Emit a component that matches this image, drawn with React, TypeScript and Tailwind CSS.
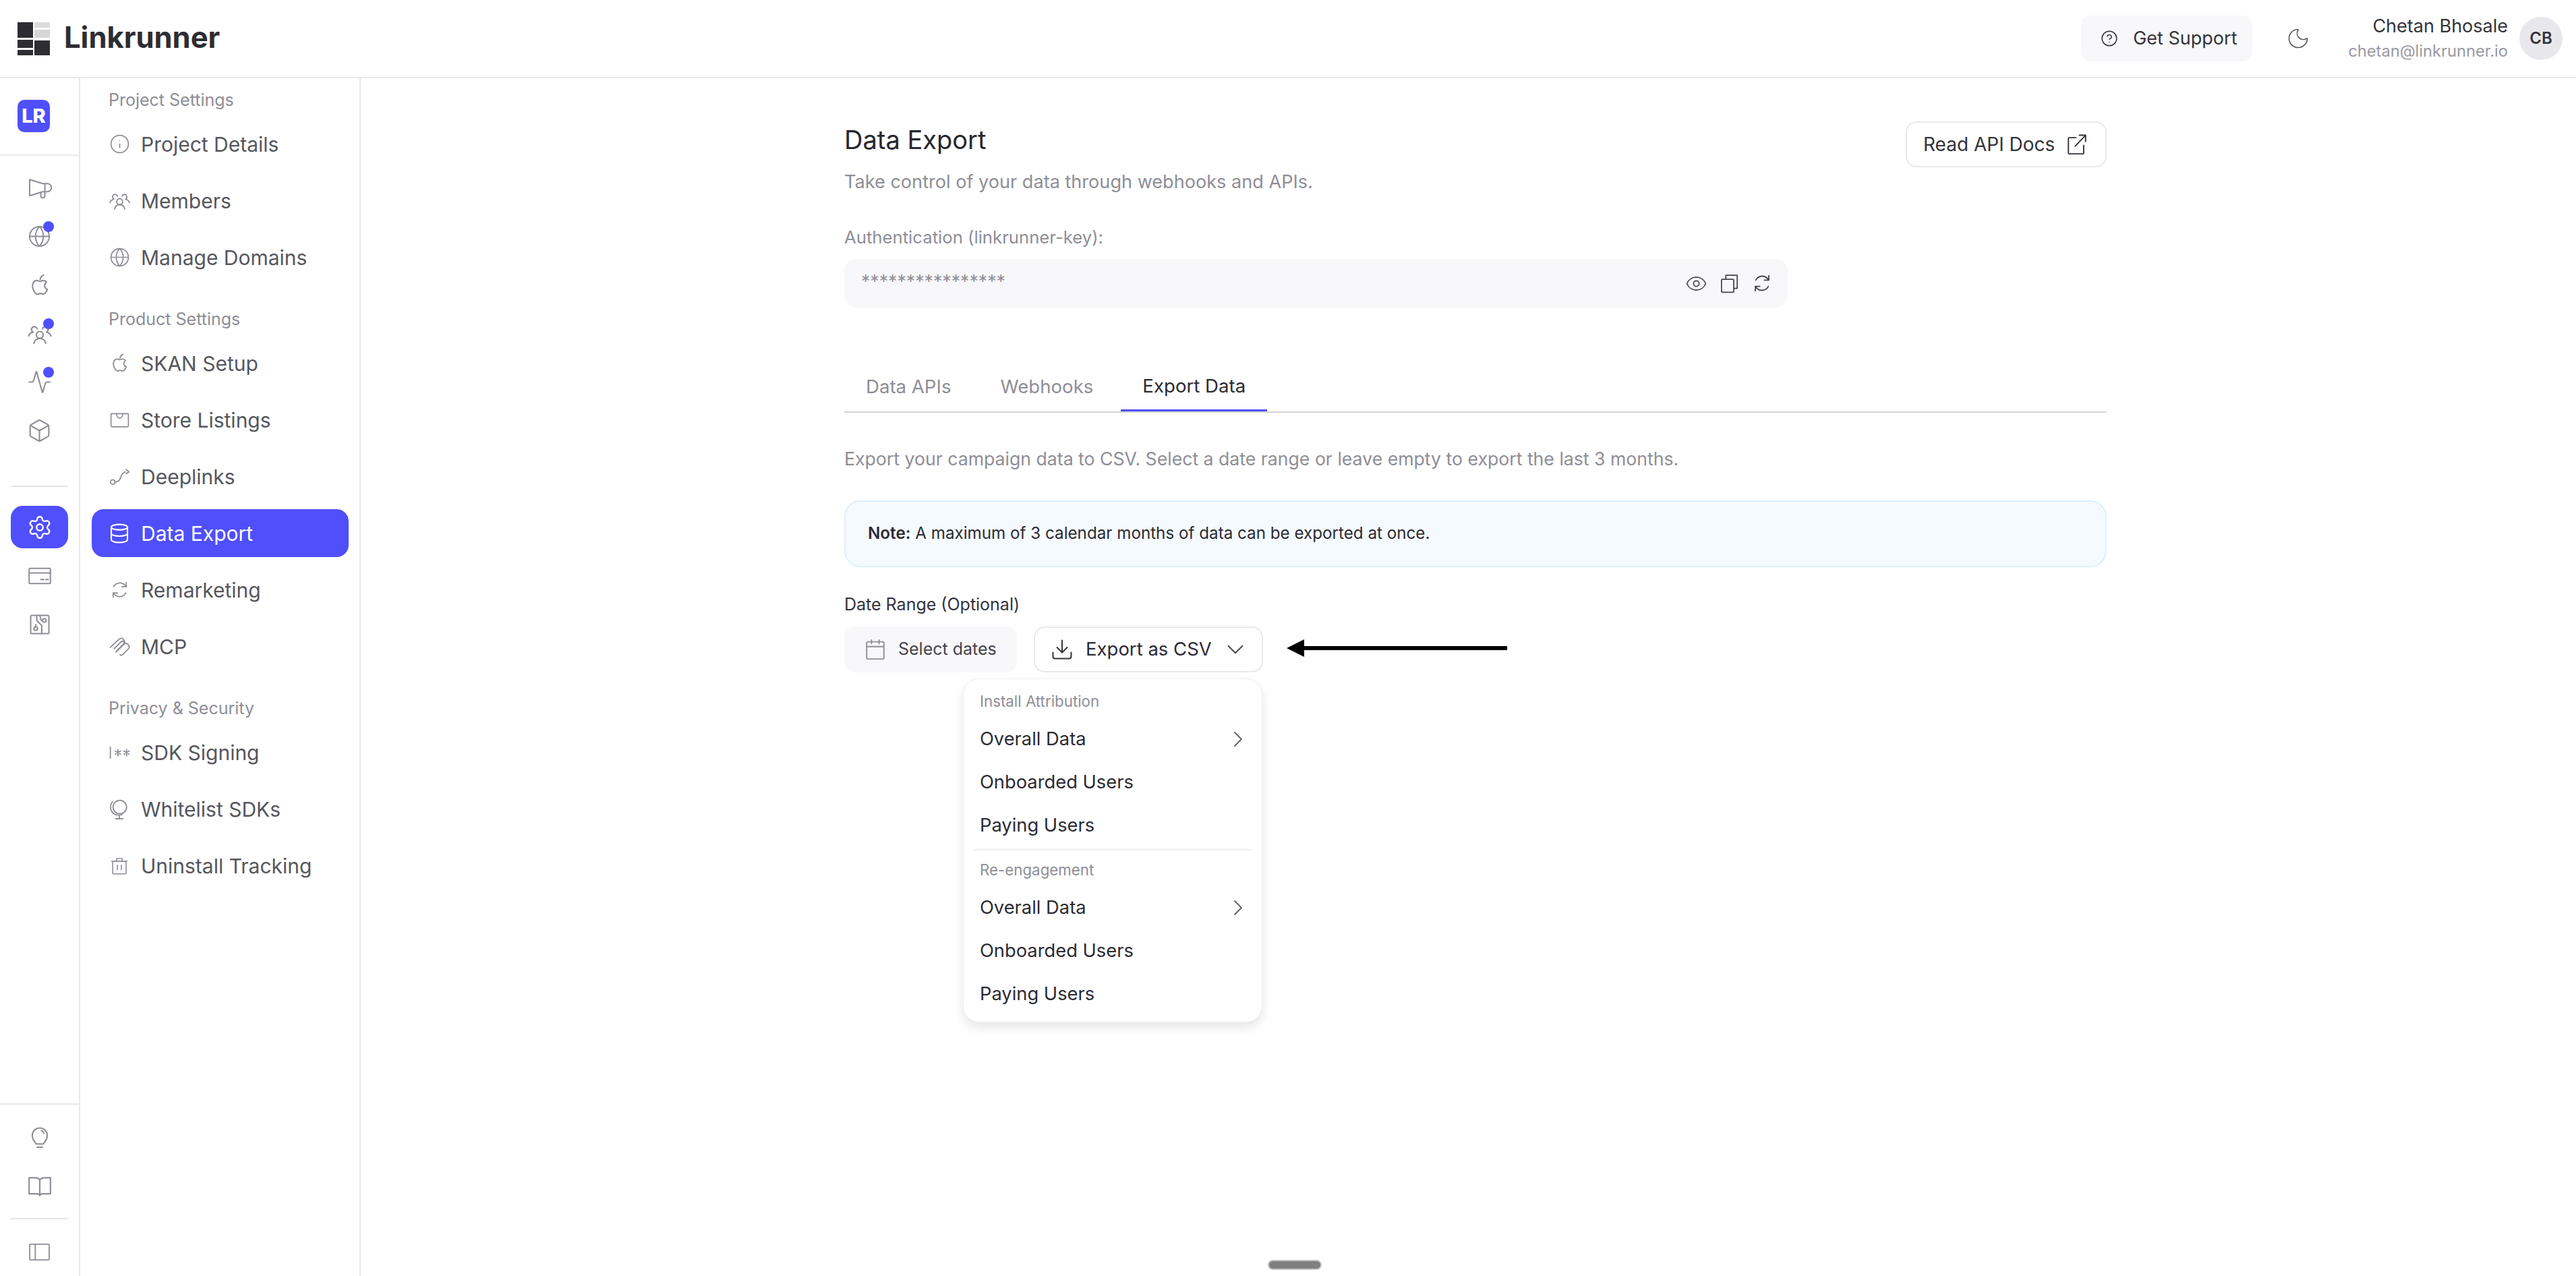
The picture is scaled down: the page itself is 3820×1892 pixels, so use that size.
import React from "react";
import { Globe, Activity, Box, Settings, Info, Database, Eye, Download, ChevronDown, ChevronRight, Moon, CircleHelp } from "lucide-react";

type SP = { className?: string; children?: React.ReactNode };
const SW = 1.35;
const Svg = ({ className = "w-[36px] h-[36px]", children }: SP) => (
  <svg viewBox="0 0 24 24" fill="none" stroke="currentColor" strokeWidth={SW} strokeLinecap="round" strokeLinejoin="round" className={`shrink-0 ${className}`}>{children}</svg>
);

const Megaphone = (p: SP) => <Svg {...p}><path d="M2 3.500v16l13-4h4.500a3.500 3.500 0 0 0 0-8H15L2 3.500Z"/><path d="M13 16v3.500a2 2 0 0 0 4 0V16"/><path d="M17 8.500v7"/></Svg>;
const People = (p: SP) => <Svg {...p}><circle cx="12" cy="13" r="3.200"/><path d="M6.500 21c.6-3 2.800-4.600 5.500-4.600s4.900 1.600 5.500 4.600"/><path d="M9.500 7.200a2.700 2.700 0 1 0-3.800 3.200c-2 .4-3.500 1.600-4.200 3.600"/><path d="M14.500 7.200a2.700 2.700 0 1 1 3.800 3.200c2 .4 3.500 1.600 4.200 3.600"/></Svg>;
const AppleLogo = (p: SP) => <Svg {...p}><path d="M16.500 12.500c0-2.200 1.700-3.300 1.800-3.400-1-1.400-2.500-1.600-3-1.600-1.300-.1-2.500.8-3.100.8-.7 0-1.700-.8-2.800-.8-1.400 0-2.800.8-3.500 2.100-1.500 2.600-.4 6.500 1.100 8.600.7 1 1.600 2.200 2.700 2.200 1.100 0 1.500-.7 2.800-.7s1.700.7 2.800.7c1.200 0 1.900-1.100 2.600-2.100.8-1.200 1.200-2.300 1.200-2.400-.1 0-2.600-1-2.600-3.400Z"/><path d="M12.400 6.500c.1-1.800 1.200-3.200 3-4"/></Svg>;
const Card = (p: SP) => <Svg {...p}><rect x="1.500" y="4.500" width="21" height="15" rx="1"/><path d="M1.500 9h21"/><path d="M13 15.500h3M18 15.500h2.500"/></Svg>;
const Circuit = (p: SP) => <Svg {...p}><rect x="3" y="3" width="18" height="18" rx="1"/><path d="M9 3v5l5 5v8"/><circle cx="8" cy="16" r="1.800"/><path d="M8 14.200V12"/><circle cx="16.500" cy="8" r="1.800"/><path d="M14.700 8H13.500L12 3"/></Svg>;
const Bulb = (p: SP) => <Svg {...p}><path d="M8.500 18.500c0-1.500-3.500-3.300-3.500-8a7 7 0 0 1 14 0c0 4.700-3.500 6.500-3.500 8Z"/><path d="M9.500 21.500h5"/><path d="M13.500 6c1.300.4 2 1.300 2.300 2.500"/></Svg>;
const Book = (p: SP) => <Svg {...p}><path d="M12 6c-1-1.500-2.500-2-4-2H2v15h7.500c1 0 2 .4 2.500 1.500.5-1.100 1.500-1.500 2.500-1.500H22V4h-6c-1.500 0-3 .5-4 2Z"/><path d="M12 6v14.500"/></Svg>;
const Panel = (p: SP) => <Svg {...p}><rect x="1.500" y="3.500" width="21" height="17" rx="1"/><path d="M7.500 3.500v17"/></Svg>;
const Store = (p: SP) => <Svg {...p}><rect x="2" y="5" width="20" height="15" rx="1"/><path d="M8.500 5c0 3 1.500 5 3.500 5s3.500-2 3.500-5"/></Svg>;
const Deeplink = (p: SP) => <Svg {...p}><circle cx="4.500" cy="18" r="2.500"/><path d="M7 18c4 0 5-2 6-5s2-5 5-6"/><path d="M19 4.500 22 7l-3 2"/></Svg>;
const Mcp = (p: SP) => <Svg {...p}><path d="M2 13 11 4.500c1.500-1.500 3.500-1.500 5 0s1.500 3.500 0 5l-7 7"/><path d="M6 14.500l7.500-7.500c.8-.8 2-.8 2.800 0s1 2 .2 2.800"/><path d="M8 18l8-8c1.500-1.500 3.500-1.500 5 0s1.500 3.500 0 5l-6 6c-.7.7-1.500.7-2.500 0"/></Svg>;
const Signing = (p: SP) => <Svg {...p}><path d="M2 6v12"/><path d="M10.500 8.500v7M7.500 10.200l6 3.600M13.500 10.200l-6 3.600"/><path d="M20 8.500v7M17 10.200l6 3.600M23 10.200l-6 3.600"/></Svg>;
const Earth = (p: SP) => <Svg {...p}><circle cx="12.500" cy="9.500" r="7.500"/><path d="M4.500 3.500C.5 8 2 15 7 17.500c2.500 1.200 5.500 1.200 8 .3"/><path d="M12 19v3M8 22.500h8"/></Svg>;
const Trash = (p: SP) => <Svg {...p}><rect x="3.500" y="6" width="17" height="16" rx="1"/><path d="M2 6h20M8.500 6V2.500h7V6"/><path d="M9.500 11v6M14.500 11v6"/></Svg>;
const Copy = (p: SP) => <Svg {...p}><rect x="3" y="7" width="14" height="15" rx="1"/><path d="M8 7V2.500h13V17.500h-4"/></Svg>;
const Ext = (p: SP) => <Svg {...p}><path d="M11 5H4a1 1 0 0 0-1 1v15a1 1 0 0 0 1 1h14a1 1 0 0 0 1-1v-8"/><path d="M10 14 21 2.500M14.500 2.500H21V9"/></Svg>;
const Cal = (p: SP) => <Svg {...p}><rect x="3" y="4" width="18" height="18" rx="1"/><path d="M3 9h18M8 2v4M16 2v4"/></Svg>;
const Sync = (p: SP) => <Svg {...p}><path d="M5 8.500A8 8 0 0 1 19 8"/><path d="M19.500 3.500v5h-5"/><path d="M19 15.500A8 8 0 0 1 5 16"/><path d="M4.500 20.500v-5h5"/></Svg>;

const RailBtn = ({ children, active, dot }: { children: React.ReactNode; active?: boolean; dot?: boolean }) => (
  <div className={active ? "relative h-[63px] mx-[16px] rounded-[18px] bg-[#4f4ffb] text-white flex items-center justify-center" : "relative h-[63px] mx-[16px] rounded-[18px] text-[#8e8e96] flex items-center justify-center"}>
    {children}
    {dot ? <span className="absolute left-[48px] top-[9px] w-[16px] h-[16px] rounded-full bg-[#4f4ffb]" /> : null}
  </div>
);

const NavItem = ({ label, icon, active }: { label: string; icon: React.ReactNode; active?: boolean }) => (
  <div className={active ? "h-[71px] rounded-[18px] bg-[#4f4ffb] text-white flex items-center pl-[27px] gap-[18px] text-[30px]" : "h-[71px] rounded-[18px] text-[#56565e] flex items-center pl-[27px] gap-[18px] text-[30px]"}>
    <span className={active ? "w-[28px] flex justify-center text-white" : "w-[28px] flex justify-center text-[#8e8e96]"}>{icon}</span>
    <span className="pt-[2px]">{label}</span>
  </div>
);

const Group = ({ title, children }: SP & { title: string }) => (
  <div className="flex flex-col gap-[13px]">
    <div className="h-[36px] flex items-center pl-[25px] pt-[3px] text-[25px] text-[#8e8e96]">{title}</div>
    {children}
  </div>
);

const MenuItem = ({ label, more }: { label: string; more?: boolean }) => (
  <div className="h-[64px] flex items-center justify-between pl-[24px] pr-[15px] pt-[2px] text-[27.300px] text-[#2b2b33]">
    <span>{label}</span>
    {more ? <ChevronRight className="w-[40px] h-[40px] text-[#5f5f68]" strokeWidth={1.100} /> : null}
  </div>
);
const MenuLabel = ({ label }: { label: string }) => (
  <div className="h-[40px] flex items-center pl-[24px] pt-[2px] text-[22.300px] text-[#8e8e96]">{label}</div>
);

export default function App() {
  return (
    <div className="w-[3820px] h-[1892px] overflow-hidden bg-white flex flex-col font-['Inter',sans-serif]">
      <header className="h-[116px] shrink-0 border-b-[2px] border-[#e8e8e8] flex items-center pl-[26px] pr-[20px]">
        <svg viewBox="0 0 48 49" className="w-[48px] h-[49px]">
          <rect x="0" y="0" width="23" height="23" fill="#2d2d33" />
          <rect x="0" y="26" width="23" height="12" fill="#2d2d33" />
          <rect x="0" y="41" width="23" height="8" fill="#2d2d33" />
          <rect x="25" y="0" width="23" height="8" fill="#dcdcdc" />
          <rect x="25" y="11" width="23" height="12" fill="#d6d6d6" />
          <rect x="25" y="27" width="23" height="22" fill="#2d2d33" />
        </svg>
        <span className="ml-[21px] -mt-[3px] text-[43.500px] font-bold text-[#2d2d33]">Linkrunner</span>
        <div className="ml-auto flex items-center">
          <div className="w-[254px] h-[68px] rounded-[14px] bg-[#f8f8fa] flex items-center pl-[29px] gap-[22px] text-[27px] text-[#33333b]">
            <CircleHelp className="w-[26px] h-[26px] shrink-0" strokeWidth={1.400} />
            <span>Get Support</span>
          </div>
          <Moon className="ml-[50px] w-[36px] h-[36px] shrink-0 text-[#55555c]" strokeWidth={1.100} />
          <div className="ml-[56px] flex flex-col items-end">
            <span className="text-[27px] leading-[38px] text-[#33333b]">Chetan Bhosale</span>
            <span className="text-[23.700px] leading-[36px] text-[#9a9aa2]">chetan@linkrunner.io</span>
          </div>
          <div className="ml-[17px] w-[64px] h-[64px] rounded-full bg-[#e8e8ec] flex items-center justify-center text-[24px] font-semibold text-[#33333b]">CB</div>
        </div>
      </header>
      <div className="flex-1 flex min-h-0">
        <aside className="w-[119px] shrink-0 border-r-[2px] border-[#e8e8e8] flex flex-col">
          <div className="h-[115px] shrink-0 border-b-[2px] border-[#e8e8e8] pt-[32px] pl-[26px]">
            <div className="w-[48px] h-[48px] rounded-[10px] bg-[#4f4ffb] text-white text-[29px] font-extrabold flex items-center justify-center">LR</div>
          </div>
          <div className="flex flex-col gap-[9px] pt-[16px]">
            <RailBtn><Megaphone /></RailBtn>
            <RailBtn dot><Globe className="w-[35px] h-[35px]" strokeWidth={SW} /></RailBtn>
            <RailBtn><AppleLogo className="w-[38px] h-[38px]" /></RailBtn>
            <RailBtn dot><People className="w-[38px] h-[38px]" /></RailBtn>
            <RailBtn dot><Activity className="w-[37px] h-[37px]" strokeWidth={SW} /></RailBtn>
            <RailBtn><Box className="w-[37px] h-[37px]" strokeWidth={SW} /></RailBtn>
          </div>
          <div className="mt-[50px] mx-[16px] h-[2px] shrink-0 bg-[#e5e5e5]" />
          <div className="flex flex-col gap-[9px] mt-[28px]">
            <RailBtn active><Settings className="w-[38px] h-[38px]" strokeWidth={1.500} /></RailBtn>
            <RailBtn><Card /></RailBtn>
            <RailBtn><Circuit className="w-[36px] h-[36px]" /></RailBtn>
          </div>
          <div className="mt-auto border-t-[2px] border-[#e8e8e8] pt-[16px] flex flex-col gap-[10px]">
            <RailBtn><Bulb className="w-[38px] h-[38px]" /></RailBtn>
            <RailBtn><Book className="w-[38px] h-[38px]" /></RailBtn>
            <div className="mt-[6px] mx-[16px] h-[2px] shrink-0 bg-[#e5e5e5]" />
            <div className="mt-[7px] mb-[4px]"><RailBtn><Panel className="w-[33px] h-[33px]" /></RailBtn></div>
          </div>
        </aside>
        <nav className="w-[416px] shrink-0 border-r-[2px] border-[#e8e8e8] pt-[13px] pl-[17px] pr-[16px] flex flex-col gap-[37px]">
          <Group title="Project Settings">
            <NavItem label="Project Details" icon={<Info className="w-[31px] h-[31px] shrink-0" strokeWidth={SW} />} />
            <NavItem label="Members" icon={<People className="w-[33px] h-[33px]" />} />
            <NavItem label="Manage Domains" icon={<Globe className="w-[31px] h-[31px] shrink-0" strokeWidth={SW} />} />
          </Group>
          <Group title="Product Settings">
            <NavItem label="SKAN Setup" icon={<AppleLogo className="w-[33px] h-[33px]" />} />
            <NavItem label="Store Listings" icon={<Store className="w-[31px] h-[31px]" />} />
            <NavItem label="Deeplinks" icon={<Deeplink className="w-[33px] h-[33px]" />} />
            <NavItem label="Data Export" active icon={<Database className="w-[32px] h-[32px] shrink-0" strokeWidth={1.600} />} />
            <NavItem label="Remarketing" icon={<Sync className="w-[31px] h-[31px]" />} />
            <NavItem label="MCP" icon={<Mcp className="w-[33px] h-[33px]" />} />
          </Group>
          <Group title="Privacy & Security">
            <NavItem label="SDK Signing" icon={<Signing className="w-[32px] h-[32px]" />} />
            <NavItem label="Whitelist SDKs" icon={<Earth className="w-[32px] h-[32px]" />} />
            <NavItem label="Uninstall Tracking" icon={<Trash className="w-[28px] h-[28px]" />} />
          </Group>
        </nav>
        <main className="flex-1 pl-[717px] pt-[64px]">
          <div className="w-[1872px] flex flex-col">
            <div className="flex justify-between items-start">
              <div className="flex flex-col">
                <h1 className="h-[54px] flex items-center text-[38px] font-normal text-[#27272e]">Data Export</h1>
                <p className="mt-[16px] h-[40px] flex items-center text-[27.100px] text-[#8e8e96]">Take control of your data through webhooks and APIs.</p>
              </div>
              <div className="w-[298px] h-[68px] rounded-[16px] border-[2px] border-[#e8e8e8] flex items-center pl-[24px] gap-[16px] text-[28px] text-[#33333b]">
                <span>Read API Docs</span>
                <Ext className="w-[34px] h-[34px]" />
              </div>
            </div>
            <div className="mt-[44px] h-[36px] flex items-center text-[25.700px] text-[#8e8e96]">Authentication (linkrunner-key):</div>
            <div className="mt-[14px] w-[1399px] h-[72px] rounded-[18px] bg-[#f8f8fa] flex items-center pl-[25px] pr-[22px] gap-[17px]">
              <span className="mr-auto text-[26.700px] text-[#8e8e96] -mt-[6px]">****************</span>
              <Eye className="w-[33px] h-[33px] shrink-0 text-[#44444c]" strokeWidth={1.300} />
              <Copy className="w-[31px] h-[31px] text-[#44444c]" />
              <Sync className="w-[32px] h-[32px] text-[#44444c]" />
            </div>
            <div className="mt-[79px] h-[77px] border-b-[2px] border-[#d4d4d4] flex gap-[9px]">
              <div className="h-[75px] px-[32px] pt-[3px] flex items-center text-[27.600px] text-[#8e8e96]">Data APIs</div>
              <div className="h-[75px] px-[32px] pt-[3px] flex items-center text-[27.600px] text-[#8e8e96]">Webhooks</div>
              <div className="h-[75px] px-[32px] pt-[3px] border-b-[3px] border-[#4f4ffb] flex items-center text-[27.600px] text-[#2b2b33]">Export Data</div>
            </div>
            <p className="mt-[49px] h-[40px] flex items-center text-[26.650px] text-[#8e8e96]">Export your campaign data to CSV. Select a date range or leave empty to export the last 3 months.</p>
            <div className="mt-[41px] h-[99px] rounded-[24px] border-[2px] border-[#dcefff] bg-[#f5faff] flex items-center pl-[33px] text-[24.200px] text-[#2b2b33]">
              <span><strong className="font-semibold">Note:</strong> A maximum of 3 calendar months of data can be exported at once.</span>
            </div>
            <div className="mt-[38px] h-[36px] flex items-center text-[25px] text-[#33333b]">Date Range (Optional)</div>
            <div className="mt-[14px] flex items-center">
              <div className="w-[256px] h-[68px] rounded-[16px] bg-[#f8f8fa] flex items-center pl-[29px] gap-[17px] text-[25px] text-[#44444c]">
                <Cal className="w-[34px] h-[34px] text-[#8e8e96]" />
                <span>Select dates</span>
              </div>
              <div className="relative ml-[25px]">
                <div className="w-[340px] h-[68px] rounded-[16px] border-[2px] border-[#e8e8e8] flex items-center pl-[22px] gap-[17px] text-[27.500px] text-[#2b2b33]">
                  <Download className="w-[36px] h-[36px] shrink-0 text-[#33333b]" strokeWidth={SW} />
                  <span>Export as CSV</span>
                  <ChevronDown className="-ml-[3px] w-[42px] h-[42px] shrink-0 text-[#44444c]" strokeWidth={1.100} />
                </div>
                <div className="absolute top-[77px] right-[1px] w-[444px] rounded-[24px] border-[1px] border-[#efefef] bg-white shadow-[0_8px_16px_rgba(0,0,0,0.10)] pt-[12px] pb-[10px] flex flex-col">
                  <MenuLabel label="Install Attribution" />
                  <div className="mt-[4px]" />
                  <MenuItem label="Overall Data" more />
                  <MenuItem label="Onboarded Users" />
                  <MenuItem label="Paying Users" />
                  <div className="mx-[15px] mt-[4px] mb-[8px] h-[2px] bg-[#f0f0f0]" />
                  <MenuLabel label="Re-engagement" />
                  <div className="mt-[4px]" />
                  <MenuItem label="Overall Data" more />
                  <MenuItem label="Onboarded Users" />
                  <MenuItem label="Paying Users" />
                </div>
              </div>
              <div className="ml-[35px] -mt-[5px] flex items-center">
                <div className="w-0 h-0 border-y-[13px] border-y-transparent border-r-[26px] border-r-black" />
                <div className="w-[301px] h-[6px] bg-black" />
              </div>
            </div>
          </div>
          <div className="absolute left-[1880px] top-[1868px] w-[80px] h-[15px] rounded-full border-[2px] border-[#c4c4c4] bg-[#808080]" />
        </main>
      </div>
    </div>
  );
}
